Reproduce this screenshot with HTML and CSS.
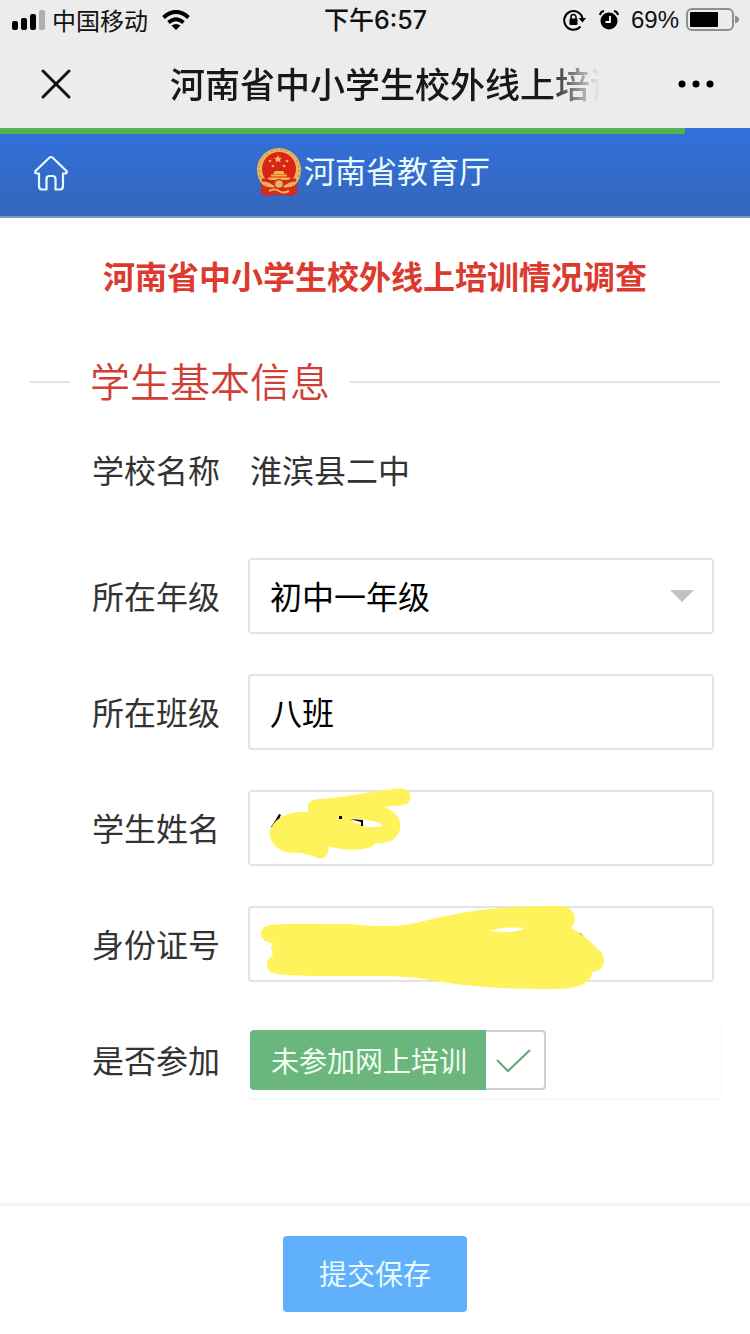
FILE: index.html
```html
<!DOCTYPE html>
<html lang="zh-CN">
<head>
    <meta charset="UTF-8">
    <meta name="viewport" content="width=device-width">
    <title>河南省中小学生校外线上培训情况调查</title>
    <link rel="stylesheet" href="styles.css">
</head>
<body>
    <div class="status-bar">
        <div class="status-left">
            <svg width="34" height="20" viewBox="0 0 34 20">
                <rect x="0" y="11" width="6" height="9" rx="2"/>
                <rect x="9" y="8" width="6" height="12" rx="2"/>
                <rect x="18" y="4" width="6" height="16" rx="2"/>
                <rect x="27" y="0" width="6" height="20" rx="2" fill="#b0b0b0"/>
            </svg>
            <span class="carrier">中国移动</span>
            <svg width="28" height="20" viewBox="0 0 28 20" fill="none" stroke="#000" stroke-width="4">
                <path d="M1.500 7.500 Q14 -3.500 26.500 7.500"/>
                <path d="M6.500 12.500 Q14 6 21.500 12.500"/>
                <path d="M14 20 L9.500 15.500 Q14 12.500 18.500 15.500Z" fill="#000" stroke="none"/>
            </svg>
        </div>
        <div class="status-time">下午6:57</div>
        <div class="status-right">
            <svg width="24" height="22" viewBox="0 0 24 22">
                <path d="M17.500 17.500 A9.300 9.300 0 1 1 19.500 9" fill="none" stroke="#000" stroke-width="2"/>
                <path d="M15.500 9 H23 L19.500 13.500Z"/>
                <rect x="6.500" y="9.500" width="8" height="6.500" rx="1"/>
                <path d="M8 10 V8 a2.500 2.500 0 0 1 5 0 V10" fill="none" stroke="#000" stroke-width="1.500"/>
            </svg>
            <svg class="alarm" width="20" height="20" viewBox="0 0 20 20">
                <circle cx="10" cy="11" r="8.500"/>
                <path d="M1 5 Q1.500 1.500 5 1 M15 1 Q18.500 1.500 19 5" fill="none" stroke="#000" stroke-width="2"/>
                <path d="M11 6 V12 H6.500" fill="none" stroke="#fff" stroke-width="1.800"/>
            </svg>
            <span class="percent">69%</span>
            <svg width="53" height="24" viewBox="0 0 53 24">
                <rect x="1" y="1" width="46" height="21" rx="5" fill="none" stroke="#8e8e8e" stroke-width="2"/>
                <rect x="4" y="4" width="28" height="15" rx="1"/>
                <path d="M49 7.500 Q53 9 53 11.500 Q53 14 49 15.500Z" fill="#8e8e8e"/>
            </svg>
        </div>
    </div>

    <div class="nav-bar">
        <button class="nav-btn" aria-label="关闭">
            <svg width="32" height="32" viewBox="0 0 32 32" fill="none" stroke="#111" stroke-width="3" stroke-linecap="round">
                <path d="M3 3 L29 29 M29 3 L3 29"/>
            </svg>
        </button>
        <div class="nav-title">河南省中小学生校外线上培训</div>
        <button class="nav-btn" aria-label="更多">
            <svg width="36" height="8" viewBox="0 0 36 8">
                <circle cx="4" cy="4" r="3.500"/>
                <circle cx="18" cy="4" r="3.500"/>
                <circle cx="32" cy="4" r="3.500"/>
            </svg>
        </button>
    </div>

    <header class="site-header">
        <div class="progress"></div>
        <a class="home" href="#" aria-label="首页">
            <svg width="34" height="36" viewBox="0 0 34 36" fill="none" stroke="#e6fbff" stroke-width="2.200" stroke-linejoin="round">
                <path d="M17 2 Q18 2 19 3 L32.500 16 Q33.500 18.500 31 18.500 H29 V31 Q29 34.500 26 34.500 H21.500 V24 Q21.500 21 18.500 21 H15.500 Q12.500 21 12.500 24 V34.500 H8 Q5 34.500 5 31 V18.500 H3 Q0.500 18.500 1.500 16 L15 3 Q16 2 17 2Z"/>
            </svg>
        </a>
        <div class="brand">
            <svg width="46" height="50" viewBox="0 0 46 50">
                <path d="M5 31 L5 47 Q12 50 18 48 H28 Q34 50 41 47 L41 31Z" fill="#d8291b"/>
                <ellipse cx="23" cy="23" rx="22" ry="22" fill="#e9b65c"/>
                <ellipse cx="23" cy="23" rx="20" ry="20" fill="none" stroke="#b98334" stroke-width="1" stroke-dasharray="2 3"/>
                <circle cx="23" cy="22" r="17" fill="#d92518"/>
                <path d="M22 8 l1.200 2.700 2.900.2 -2.200 1.900 .7 2.800 -2.600-1.500 -2.500 1.500 .7-2.800 -2.200-1.900 2.900-.2Z" fill="#f5c04e"/>
                <g fill="#f5b648">
                    <circle cx="14" cy="14" r="1.300"/>
                    <circle cx="31" cy="14" r="1.300"/>
                    <circle cx="17" cy="19" r="1.300"/>
                    <circle cx="28" cy="19" r="1.300"/>
                    <path d="M17 27 L19 24 H27 L29 27Z"/>
                    <rect x="15" y="27.500" width="16" height="2"/>
                    <rect x="12" y="30.500" width="22" height="2.500"/>
                </g>
                <path d="M6 33 Q14 33 18 37 M40 33 Q32 33 28 37" fill="none" stroke="#d92518" stroke-width="3"/>
                <circle cx="23" cy="37" r="4.500" fill="#e9b65c" stroke="#c23a1c" stroke-width="1.500"/>
                <path d="M5 37 Q13 42 19 40 Q23 42 27 40 Q33 42 41 37 L41 46 Q31 49 23 47 Q15 49 5 46Z" fill="#d8291b"/>
                <path d="M13 44 Q19 41 23 44 T33 44" fill="none" stroke="#f0b54c" stroke-width="2"/>
            </svg>
            <span>河南省教育厅</span>
        </div>
    </header>

    <form class="survey">
        <h1>河南省中小学生校外线上培训情况调查</h1>
        <h2><span>学生基本信息</span></h2>

        <div class="row school">
            <div class="row-label">学校名称</div>
            <div class="school-name">淮滨县二中</div>
        </div>
        <div class="row">
            <label class="row-label" for="grade">所在年级</label>
            <div class="control">
                <select id="grade">
                    <option>初中一年级</option>
                </select>
                <svg class="arrow" width="24" height="12" viewBox="0 0 24 12"><path d="M0 0H24L12 12Z" fill="#c2c2c2"/></svg>
            </div>
        </div>
        <div class="row">
            <label class="row-label" for="class">所在班级</label>
            <div class="control"><input type="text" id="class" value="八班"></div>
        </div>
        <div class="row">
            <label class="row-label" for="name">学生姓名</label>
            <div class="control">
                <input type="text" id="name">
                <svg class="marker" width="250" height="100" viewBox="0 0 250 100">
                    <path d="M31 47 L35 41 L39 34 L41 35 L37 44 L33 48Z"/>
                    <g fill="none" stroke="#fff35c" stroke-width="17" stroke-linecap="round" stroke-linejoin="round">
                        <path d="M162 17 C140 17 112 26 76 28 C105 30 132 29 146 37 C158 45 150 56 137 55 C115 54 98 46 75 43 C60 37 42 42 38 53 C40 63 48 65 60 64 L76 68 C85 63 75 55 90 58 C105 62 118 62 128 59"/>
                        <path d="M47 48 L80 50 M47 58 L120 55 M80 40 L105 47" stroke-width="20"/>
                        <path d="M80 70 V68"/>
                    </g>
                    <path d="M123 41 Q135 40 142 45 Q135 49 123 46Z" fill="#fff"/>
                    <path d="M99 36 h3 v3 h-3Z M110 39 L123 40 V46 L121 46 V42Z"/>
                </svg>
            </div>
        </div>
        <div class="row">
            <label class="row-label" for="idcard">身份证号</label>
            <div class="control">
                <input type="text" id="idcard">
                <svg class="marker" width="400" height="110" viewBox="0 0 400 110">
                    <path d="M340 43 L346 49" stroke="#222"/>
                    <path d="M29 35 C45 33 80 34 110 34 C145 38 168 36 188 30 C225 22 250 16 318 16 C333 15 340 28 331 38 C345 45 352 54 362 63 C368 75 360 82 352 82 C352 93 338 98 320 99 C270 100 225 96 195 91 C170 86 155 86 120 86 C90 86 55 87 32 83 C24 77 26 68 33 66 L31 58 L33 53 C20 53 16 39 29 35Z" fill="#fff35c"/>
                    <path d="M249 41 Q265 36 284 38 Q278 44 249 41Z" fill="#fff"/>
                </svg>
            </div>
        </div>
        <div class="row">
            <div class="row-label">是否参加</div>
            <div class="join-box">
                <label class="join">
                    <span class="join-text">未参加网上培训</span>
                    <input type="checkbox" checked>
                    <svg class="tick" width="36" height="24" viewBox="0 0 36 24" fill="none" stroke="#69a47c" stroke-width="2"><path d="M1 11 L12 22 L34 1"/></svg>
                </label>
            </div>
        </div>

        <div class="footer">
            <button type="submit" class="submit">提交保存</button>
        </div>
    </form>
</body>
</html>
```
FILE: styles.css
```css
* {
    box-sizing: border-box;
}
body {
    margin: 0;
    min-height: 100vh;
    display: flex;
    flex-direction: column;
    background: #fff;
    color: #333;
    font-family: "Noto Sans CJK SC", sans-serif;
    font-size: 32px;
}
svg {
    display: block;
    flex: none;
}
button, input, select {
    font: inherit;
    color: inherit;
}
.status-bar {
    display: grid;
    grid-template-columns: 1fr auto 1fr;
    align-items: center;
    height: 40px;
    padding: 0 11px 0 12px;
    background: #ececec;
    color: #111;
    font-size: 24px;
    line-height: 40px;
}
.status-left, .status-right {
    display: flex;
    align-items: center;
}
.carrier {
    margin: 0 14px 0 6px;
}
.status-time {
    font-family: Inter, "Noto Sans CJK SC", sans-serif;
    font-size: 25px;
    font-weight: 500;
}
.status-right {
    justify-content: flex-end;
}
.alarm {
    margin: 0 12px;
}
.percent {
    margin-right: 7px;
    font-family: "Liberation Sans", sans-serif;
}
.nav-bar {
    display: flex;
    align-items: center;
    height: 88px;
    padding: 0 36px 0 40px;
    background: #ececec;
}
.nav-btn {
    padding: 0;
    border: none;
    background: none;
    cursor: pointer;
}
.nav-title {
    flex: 1;
    margin: 0 78px 0 98px;
    padding-bottom: 4px;
    overflow: hidden;
    white-space: nowrap;
    color: #181818;
    font-size: 35px;
    font-weight: 500;
    -webkit-mask-image: linear-gradient(to right, #000 88%, transparent);
    mask-image: linear-gradient(to right, #000 88%, transparent);
}
.site-header {
    position: relative;
    display: flex;
    align-items: center;
    justify-content: center;
    height: 90px;
    border-bottom: 2px solid #7f98c8;
    background: linear-gradient(#3270dc, #3566bb);
}
.progress {
    position: absolute;
    left: 0;
    top: 0;
    width: 685px;
    height: 6px;
    background: #55b14e;
}
.home {
    position: absolute;
    left: 34px;
    top: 27px;
}
.brand {
    display: flex;
    align-items: center;
    gap: 2px;
    padding-right: 4px;
    color: #e9fbff;
    font-size: 31px;
    line-height: 84px;
}
.brand span {
    padding-bottom: 4px;
}
.survey {
    flex: 1;
    display: flex;
    flex-direction: column;
}
h1 {
    margin: 30px 0 50px;
    color: #dc3a2e;
    font-size: 32px;
    line-height: 54px;
    text-align: center;
}
h2 {
    display: flex;
    align-items: center;
    gap: 20px;
    height: 60px;
    margin: 0 30px 22px;
    color: #d03f35;
    font-size: 40px;
    font-weight: 350;
    line-height: 56px;
}
h2 span {
    padding-bottom: 4px;
}
h2::before, h2::after {
    content: "";
    height: 2px;
    background: #e4e4e4;
}
h2::before {
    width: 40px;
}
h2::after {
    flex: 1;
}
.row {
    display: flex;
    align-items: center;
    height: 76px;
    margin: 0 36px 40px 92px;
}
.row.school {
    margin-bottom: 48px;
    padding-bottom: 4px;
}
.row-label {
    width: 156px;
    padding-bottom: 2px;
}
.school-name {
    padding: 0 0 2px 2px;
}
.control {
    position: relative;
    flex: 1;
}
.control input, .control select {
    display: block;
    width: 100%;
    height: 76px;
    padding: 0 20px 2px;
    border: 2px solid #e4e4e4;
    border-radius: 4px;
    background: #fff;
    color: #000;
    appearance: none;
}
.arrow {
    position: absolute;
    right: 20px;
    top: 32px;
    pointer-events: none;
}
/* 涂抹遮挡 */
.marker {
    position: absolute;
    left: -8px;
    top: -10px;
    pointer-events: none;
}
#idcard + .marker {
    top: -16px;
}
.join-box {
    flex: 1;
    height: 76px;
    margin: 0 -6px 0 2px;
    padding: 8px 0;
    box-shadow: 0 2px 3px #f3f3f3;
}
.join {
    position: relative;
    display: inline-flex;
    height: 60px;
    cursor: pointer;
}
.join-text {
    padding: 0 19px 0 21px;
    border-radius: 4px 0 0 4px;
    background: #6bb67c;
    color: #effff2;
    font-size: 28px;
    line-height: 60px;
}
.join input {
    width: 60px;
    height: 60px;
    margin: 0;
    border: 2px solid #d0d0d0;
    border-left: none;
    border-radius: 0 4px 4px 0;
    appearance: none;
}
.tick {
    position: absolute;
    right: 14px;
    top: 19px;
}
.footer {
    margin-top: auto;
    padding: 30px 0 22px;
    border-top: 3px solid #f6f6f6;
    text-align: center;
}
.submit {
    display: block;
    width: 184px;
    height: 76px;
    margin: 0 auto;
    padding: 0 0 2px;
    border: none;
    border-radius: 4px;
    background: #60b0fc;
    color: #e9fbff;
    font-size: 28px;
    cursor: pointer;
}
```
